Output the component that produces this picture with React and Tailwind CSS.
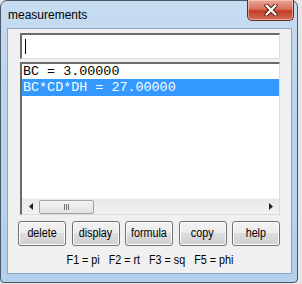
import React from "react";

const sans = { fontFamily: '"Liberation Sans", Arial, sans-serif' };

function Btn({ children }) {
  return (
    <div className="w-[48px] h-[25px] rounded-[3px] border border-[#707070] bg-[linear-gradient(#f2f2f2_0%,#ebebeb_50%,#dddddd_50%,#cfcfcf_100%)] shadow-[inset_0_0_0_1px_#fcfcfc] flex items-center justify-center text-[12.5px] text-black leading-none"
      style={sans}>
      <span className="inline-block [transform:scaleX(0.86)] whitespace-nowrap">{children}</span>
    </div>
  );
}

export default function App() {
  return (
    <div className="w-[302px] h-[284px] bg-[#e6e6e6] overflow-hidden">
      <div className="w-[298px] h-[283px] border border-[#4a5866] rounded-t-[7px] rounded-b-[4px] bg-[linear-gradient(180deg,#c6dcf1_0%,#bcd5ee_30%,#b4cfeb_100%)] flex flex-col pl-[6px] pr-[5px] pb-[8px]">
        <div className="h-[27px] flex justify-between shrink-0">
          <div className="pl-[1px] pt-[7px] text-[12px] leading-[14px] text-black" style={sans}>
            measurements
          </div>
          <div className="mt-[-1px] mr-[-2px] w-[47px] h-[21px] rounded-b-[5px] border border-[#6a2a20] border-t-0 bg-[linear-gradient(180deg,#e9a898_0%,#d8705e_45%,#c43c25_55%,#d2705a_100%)] shadow-[inset_0_0_0_1px_rgba(255,220,210,0.5)] flex items-center justify-center">
            <svg width="14" height="12" viewBox="0 0 14 12">
              <path d="M2.5 1.5 L11.5 10.5 M11.5 1.5 L2.5 10.5" stroke="#5a1a10" strokeWidth="4.2" strokeLinecap="round" />
              <path d="M2.5 1.5 L11.5 10.5 M11.5 1.5 L2.5 10.5" stroke="#ffffff" strokeWidth="2.4" strokeLinecap="round" />
            </svg>
          </div>
        </div>
        <div className="flex-1 bg-[#f0f0f0] border border-[#8ea6c0] flex flex-col pl-[12px] pr-[11px] pt-[4px]">
          <div className="h-[26px] bg-white border-t-2 border-l-2 border-t-[#6b6b6b] border-l-[#6b6b6b] border-r border-b border-r-[#dcdcdc] border-b-[#dcdcdc] flex items-center pl-[3px]">
            <div className="w-[1px] h-[15px] bg-black" />
          </div>
          <div className="mt-[3px] h-[153px] bg-white border-t-2 border-l-2 border-t-[#6b6b6b] border-l-[#6b6b6b] border-r border-b border-r-[#dcdcdc] border-b-[#dcdcdc] flex flex-col">
            <div className="flex-1 flex flex-col text-[13.4px]" style={{ fontFamily: '"Liberation Mono", "Courier New", monospace' }}>
              <div className="h-[15px] leading-[15px] pl-[1px] text-black whitespace-pre">BC = 3.00000</div>
              <div className="h-[17px] leading-[17px] pl-[1px] bg-[#3399ff] text-white whitespace-pre">BC*CD*DH = 27.00000</div>
            </div>
            <div className="h-[16px] bg-[linear-gradient(180deg,#e8e8e8,#f2f2f2)] border-t border-[#f8f8f8] flex items-center">
              <div className="w-[17px] h-full flex items-center justify-center">
                <svg width="4" height="7" viewBox="0 0 4 7"><path d="M4 0 L0 3.5 L4 7 Z" fill="#202020" /></svg>
              </div>
              <div className="w-[55px] h-[14px] rounded-[2px] border border-[#a4a4a4] bg-[linear-gradient(180deg,#f4f4f4,#e2e2e2)] flex items-center justify-center gap-[1px]">
                <div className="w-[1px] h-[6px] bg-[#707070]" />
                <div className="w-[1px] h-[6px] bg-[#707070]" />
                <div className="w-[1px] h-[6px] bg-[#707070]" />
              </div>
              <div className="flex-1" />
              <div className="w-[17px] h-full flex items-center justify-center">
                <svg width="4" height="7" viewBox="0 0 4 7"><path d="M0 0 L4 3.5 L0 7 Z" fill="#202020" /></svg>
              </div>
            </div>
          </div>
          <div className="mt-[6px] ml-[-2px] flex justify-between">
            <Btn>delete</Btn>
            <Btn>display</Btn>
            <Btn>formula</Btn>
            <Btn>copy</Btn>
            <Btn>help</Btn>
          </div>
          <div className="mt-[6px] flex justify-center text-[12.5px] leading-[16px] text-black" style={sans}>
            <span className="inline-block [transform:scaleX(0.86)] whitespace-pre">{"F1 = pi   F2 = rt   F3 = sq   F5 = phi"}</span>
          </div>
        </div>
      </div>
    </div>
  );
}
